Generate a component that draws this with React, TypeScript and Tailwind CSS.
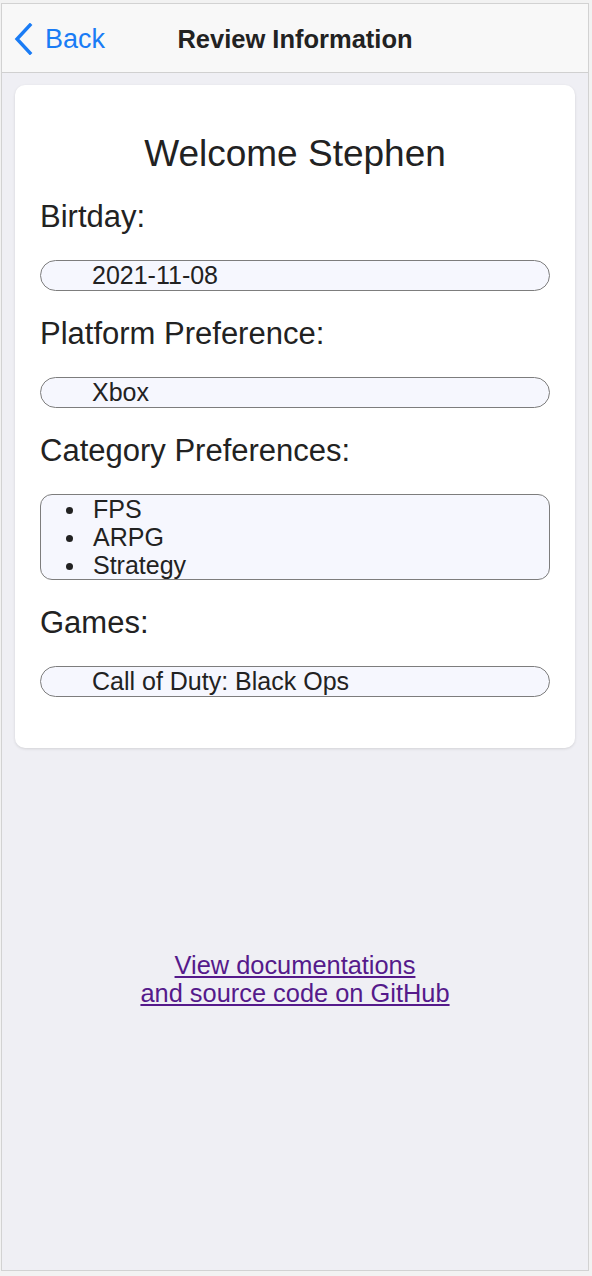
const font = { fontFamily: '"Liberation Sans", Arial, sans-serif' };

function Field({ children }: { children: React.ReactNode }) {
  return (
    <div className="h-[31px] rounded-full border border-[#7d7d7d] bg-[#f6f7fe] pl-[51px] text-[25px] leading-[29px] text-[#222]">
      {children}
    </div>
  );
}

function Label({ children }: { children: React.ReactNode }) {
  return <p className="text-[31px] leading-[36px] text-[#222]">{children}</p>;
}

function Item({ children }: { children: React.ReactNode }) {
  return (
    <li className="flex items-center h-[28px]">
      <span className="w-[7px] h-[7px] rounded-full bg-[#222] ml-[25px] mr-[20px]" />
      {children}
    </li>
  );
}

export default function App() {
  return (
    <div className="w-[592px] h-[1276px] bg-[#f2f2f2] pl-[1px] pt-[3px]" style={font}>
      <div className="w-[588px] h-[1268px] border border-[#d2d2d2] bg-[#efeff4] flex flex-col">
        <header className="h-[69px] shrink-0 bg-[#f8f8f8] border-b border-[#d0d0d0] grid grid-cols-[1fr_auto_1fr] items-center">
          <div className="flex items-center pl-[11px] pt-[2px] text-[#1a7cf5]">
            <svg width="20" height="32" viewBox="0 0 20 32" fill="none">
              <path d="M17 2 L4 16 L17 30" stroke="currentColor" strokeWidth="3.4" strokeLinecap="square" />
            </svg>
            <span className="ml-[12px] text-[27px] leading-none">Back</span>
          </div>
          <h1 className="text-[25.5px] font-bold text-[#222] pt-[2px]">Review Information</h1>
          <div />
        </header>

        <main className="px-[13px] pt-[12px]">
          <section className="bg-white rounded-[10px] shadow-[0_1px_3px_rgba(0,0,0,0.12)] px-[25px] pt-[47px] pb-[51px] flex flex-col">
            <h2 className="text-center text-[37px] leading-[44px] text-[#222]">Welcome Stephen</h2>
            <div className="mt-[23px] flex flex-col gap-[25px]">
              <Label>Birtday:</Label>
              <Field>2021-11-08</Field>
              <Label>Platform Preference:</Label>
              <Field>Xbox</Field>
              <Label>Category Preferences:</Label>
              <ul className="h-[86px] rounded-[12px] border border-[#7d7d7d] bg-[#f6f7fe] text-[25px] text-[#222] pt-[1px]">
                <Item>FPS</Item>
                <Item>ARPG</Item>
                <Item>Strategy</Item>
              </ul>
              <Label>Games:</Label>
              <Field>Call of Duty: Black Ops</Field>
            </div>
          </section>
        </main>

        <div className="mt-[203px] text-center text-[25.4px] leading-[28px]">
          <a href="#" className="text-[#551a8b] underline">
            View documentations
            <br />
            and source code on GitHub
          </a>
        </div>
      </div>
    </div>
  );
}
